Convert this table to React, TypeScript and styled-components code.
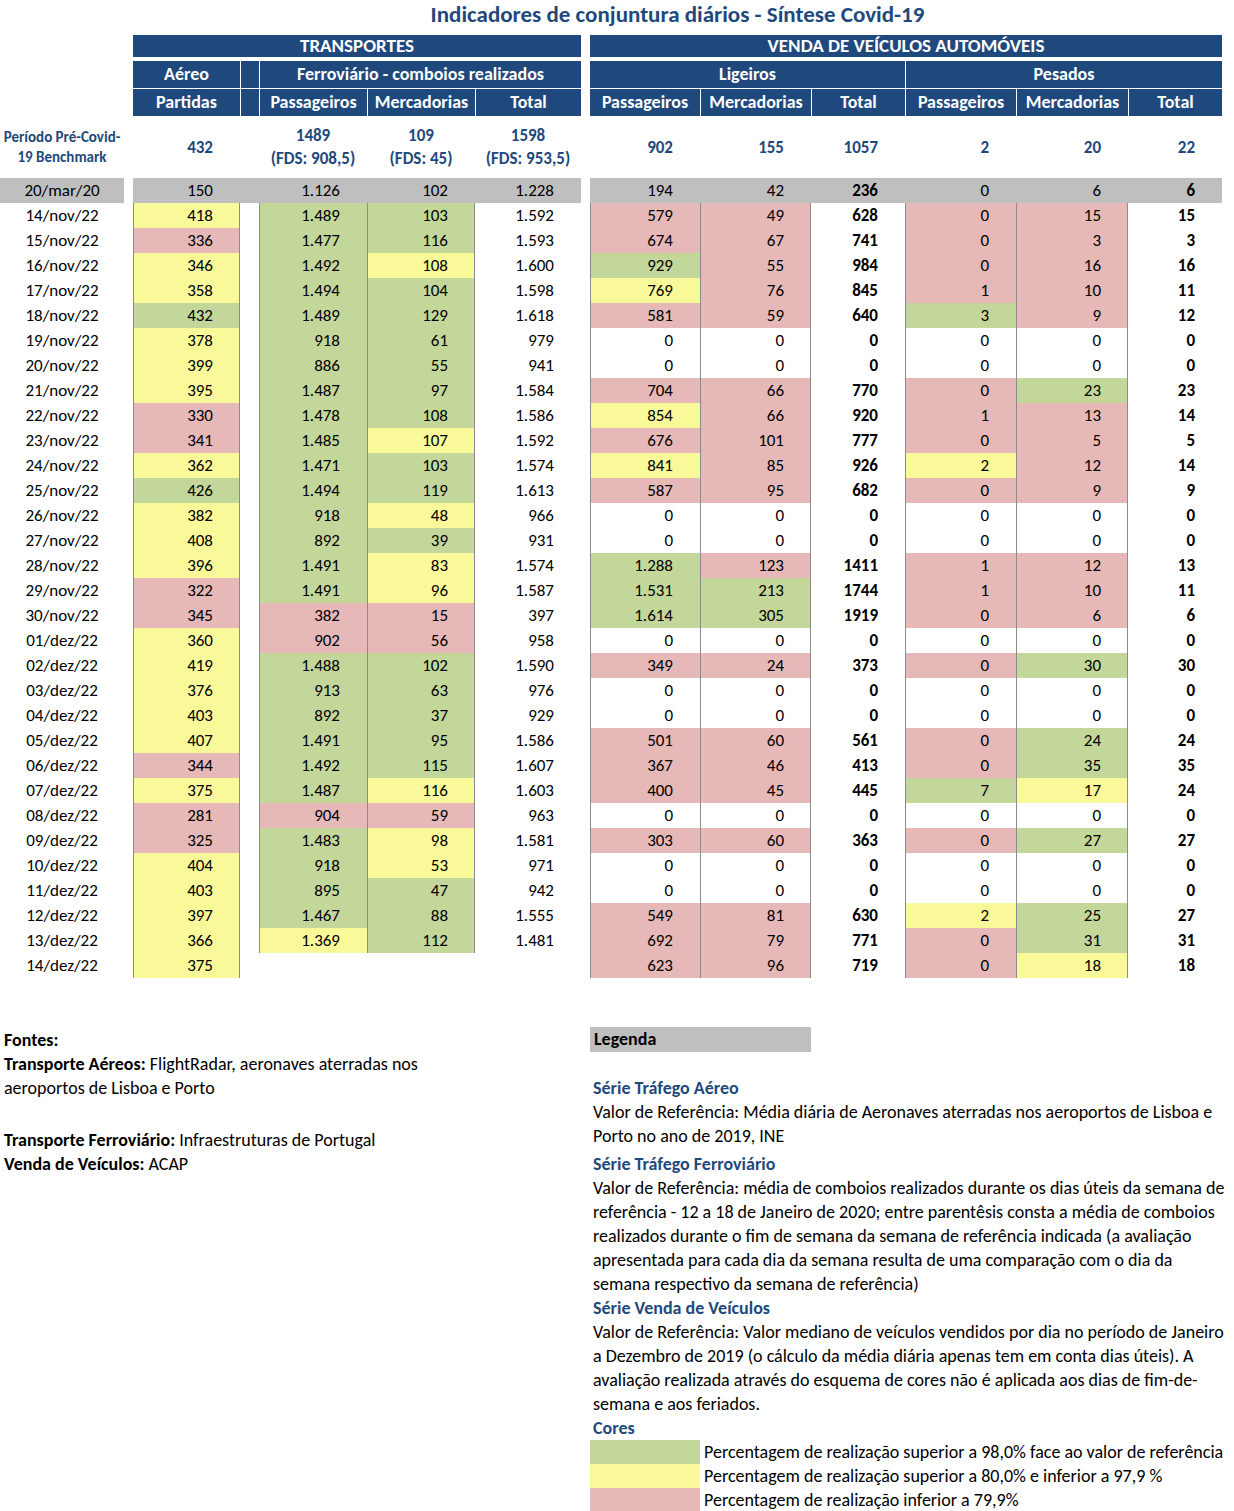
import React from 'react';
import styled, { createGlobalStyle, css } from 'styled-components';

const FONT = `"Carlito", "Calibri", "Lato", sans-serif`;
const BLUE = '#1f497d';
const GRAY = '#bfbfbf';
const LINE = '#8c8c8c';
const COLORS: Record<string, string> = {
  G: '#c4d79b',
  Y: '#f9f99a',
  R: '#e6b8b7',
};

const GlobalStyle = createGlobalStyle`
  html, body { margin: 0; padding: 0; background: #fff; }
  body { font-family: ${FONT}; color: #000; overflow: hidden; }
`;

const Page = styled.div`
  width: 1234px;
  height: 1511px;
  overflow: hidden;
`;

const Sheet = styled.div`
  display: grid;
  grid-template-columns: 124px 9px 107px 19px 108px 108px 106px 9px 110px 111px 94px 111px 112px 94px;
  width: 1222px;
`;

const Title = styled.div`
  grid-column: 3 / 15;
  height: 35px;
  line-height: 28px;
  text-align: center;
  font-size: 23px;
  font-weight: 700;
  color: ${BLUE};
`;

const HeadCell = styled.div<{ $col: string; $h: number; $mb: number; $sep?: boolean; $big?: boolean }>`
  grid-column: ${(p) => p.$col};
  height: ${(p) => p.$h}px;
  line-height: ${(p) => p.$h}px;
  margin-bottom: ${(p) => p.$mb}px;
  background: ${BLUE};
  color: #fff;
  font-weight: 700;
  font-size: ${(p) => (p.$big ? 19 : 18)}px;
  text-align: center;
  white-space: nowrap;
  box-sizing: border-box;
  ${(p) => p.$sep && css`border-left: 1px solid #fff;`}
`;

const BenchLabel = styled.div`
  grid-column: 1 / 2;
  height: 62px;
  display: flex;
  flex-direction: column;
  justify-content: center;
  align-items: center;
  font-size: 15px;
  line-height: 20px;
  font-weight: 700;
  color: ${BLUE};
  white-space: nowrap;
`;

const BenchValue = styled.div<{ $col: number; $center?: boolean }>`
  grid-column: ${(p) => p.$col} / ${(p) => p.$col + 1};
  height: 62px;
  display: flex;
  flex-direction: column;
  justify-content: center;
  align-items: ${(p) => (p.$center ? 'center' : 'flex-end')};
  padding-right: ${(p) => (p.$center ? 0 : 27)}px;
  box-sizing: border-box;
  font-size: 17px;
  line-height: 23px;
  font-weight: 700;
  color: ${BLUE};
  white-space: nowrap;
`;

const Cell = styled.div<{
  $bg?: string;
  $bl?: boolean;
  $br?: boolean;
  $bold?: boolean;
  $center?: boolean;
}>`
  height: 25px;
  line-height: 25px;
  font-size: 17px;
  box-sizing: border-box;
  white-space: nowrap;
  text-align: ${(p) => (p.$center ? 'center' : 'right')};
  padding-right: ${(p) => (p.$center ? 0 : 27)}px;
  font-weight: ${(p) => (p.$bold ? 700 : 400)};
  background: ${(p) => p.$bg || 'transparent'};
  box-shadow: ${(p) => {
    const s: string[] = [];
    if (p.$bl) s.push(`inset 1px 0 0 ${LINE}`);
    if (p.$br) s.push(`inset -1px 0 0 ${LINE}`);
    return s.length ? s.join(', ') : 'none';
  }};
`;

const Positioned = styled(Cell)<{ $col: number }>`
  grid-column: ${(p) => p.$col} / ${(p) => p.$col + 1};
`;

const Bottom = styled.div`
  display: flex;
  margin-top: 49px;
  font-size: 18px;
  line-height: 24px;
`;

const Sources = styled.div`
  width: 590px;
  box-sizing: border-box;
  padding: 1px 0 0 4px;
`;

const Line = styled.div<{ $gap?: number }>`
  white-space: nowrap;
  margin-top: ${(p) => p.$gap || 0}px;
`;

const Legend = styled.div`
  flex: 1;
`;

const LegendTag = styled.div`
  width: 221px;
  height: 25px;
  line-height: 25px;
  background: ${GRAY};
  font-weight: 700;
  padding-left: 4px;
  box-sizing: border-box;
  margin-bottom: 24px;
`;

const SeriesTitle = styled.div<{ $gap?: number }>`
  color: ${BLUE};
  font-weight: 700;
  padding-left: 3px;
  margin-top: ${(p) => p.$gap || 0}px;
  white-space: nowrap;
`;

const TextLine = styled.div`
  padding-left: 3px;
  white-space: nowrap;
`;

const SwatchRow = styled.div`
  display: flex;
  align-items: center;
  height: 24px;
`;

const Swatch = styled.div<{ $c: string }>`
  width: 110px;
  height: 24px;
  background: ${(p) => p.$c};
`;

const SwatchText = styled.div`
  padding-left: 4px;
  white-space: nowrap;
`;

const RAW = [
  '14/nov/22;418Y;1.489G;103G;1.592;579R;49R;628;0R;15R;15',
  '15/nov/22;336R;1.477G;116G;1.593;674R;67R;741;0R;3R;3',
  '16/nov/22;346Y;1.492G;108Y;1.600;929G;55R;984;0R;16R;16',
  '17/nov/22;358Y;1.494G;104G;1.598;769Y;76R;845;1R;10R;11',
  '18/nov/22;432G;1.489G;129G;1.618;581R;59R;640;3G;9R;12',
  '19/nov/22;378Y;918G;61G;979;0;0;0;0;0;0',
  '20/nov/22;399Y;886G;55G;941;0;0;0;0;0;0',
  '21/nov/22;395Y;1.487G;97G;1.584;704R;66R;770;0R;23G;23',
  '22/nov/22;330R;1.478G;108G;1.586;854Y;66R;920;1R;13R;14',
  '23/nov/22;341R;1.485G;107Y;1.592;676R;101R;777;0R;5R;5',
  '24/nov/22;362Y;1.471G;103G;1.574;841Y;85R;926;2Y;12R;14',
  '25/nov/22;426G;1.494G;119G;1.613;587R;95R;682;0R;9R;9',
  '26/nov/22;382Y;918G;48Y;966;0;0;0;0;0;0',
  '27/nov/22;408Y;892G;39G;931;0;0;0;0;0;0',
  '28/nov/22;396Y;1.491G;83Y;1.574;1.288G;123R;1411;1R;12R;13',
  '29/nov/22;322R;1.491G;96Y;1.587;1.531G;213G;1744;1R;10R;11',
  '30/nov/22;345R;382R;15R;397;1.614G;305G;1919;0R;6R;6',
  '01/dez/22;360Y;902R;56R;958;0;0;0;0;0;0',
  '02/dez/22;419Y;1.488G;102G;1.590;349R;24R;373;0R;30G;30',
  '03/dez/22;376Y;913G;63G;976;0;0;0;0;0;0',
  '04/dez/22;403Y;892G;37G;929;0;0;0;0;0;0',
  '05/dez/22;407Y;1.491G;95G;1.586;501R;60R;561;0R;24G;24',
  '06/dez/22;344R;1.492G;115G;1.607;367R;46R;413;0R;35G;35',
  '07/dez/22;375Y;1.487G;116Y;1.603;400R;45R;445;7G;17Y;24',
  '08/dez/22;281R;904R;59R;963;0;0;0;0;0;0',
  '09/dez/22;325R;1.483G;98Y;1.581;303R;60R;363;0R;27G;27',
  '10/dez/22;404Y;918G;53Y;971;0;0;0;0;0;0',
  '11/dez/22;403Y;895G;47G;942;0;0;0;0;0;0',
  '12/dez/22;397Y;1.467G;88G;1.555;549R;81R;630;2Y;25G;27',
  '13/dez/22;366Y;1.369Y;112G;1.481;692R;79R;771;0R;31G;31',
  '14/dez/22;375Y;;;;623R;96R;719;0R;18Y;18',
];

// value columns after the date: [grid column, border-left, border-right, bold]
const SPEC: [number, boolean, boolean, boolean][] = [
  [3, true, true, false],
  [5, true, false, false],
  [6, true, true, false],
  [7, false, false, false],
  [9, true, false, false],
  [10, true, true, false],
  [11, false, false, true],
  [12, true, false, false],
  [13, true, true, false],
  [14, false, false, true],
];

const parse = (v: string) => {
  const last = v.slice(-1);
  if (COLORS[last]) return { text: v.slice(0, -1), bg: COLORS[last] };
  return { text: v, bg: undefined as string | undefined };
};

const GRAY_ROW = ['150', '', '1.126', '102', '1.228', '', '194', '42', '236', '0', '6', '6'];

export default function App() {
  return (
    <Page>
      <GlobalStyle />
      <Sheet>
        <Title>Indicadores de conjuntura diários - Síntese Covid-19</Title>

        <HeadCell $col="3 / 8" $h={22} $mb={4} $big>TRANSPORTES</HeadCell>
        <HeadCell $col="9 / 15" $h={22} $mb={4} $big>VENDA DE VEÍCULOS AUTOMÓVEIS</HeadCell>

        <HeadCell $col="3 / 4" $h={27} $mb={1}>Aéreo</HeadCell>
        <HeadCell $col="4 / 5" $h={27} $mb={1} $sep />
        <HeadCell $col="5 / 8" $h={27} $mb={1} $sep>Ferroviário - comboios realizados</HeadCell>
        <HeadCell $col="9 / 12" $h={27} $mb={1}>Ligeiros</HeadCell>
        <HeadCell $col="12 / 15" $h={27} $mb={1} $sep>Pesados</HeadCell>

        <HeadCell $col="3 / 4" $h={27} $mb={0}>Partidas</HeadCell>
        <HeadCell $col="4 / 5" $h={27} $mb={0} $sep />
        <HeadCell $col="5 / 6" $h={27} $mb={0} $sep>Passageiros</HeadCell>
        <HeadCell $col="6 / 7" $h={27} $mb={0} $sep>Mercadorias</HeadCell>
        <HeadCell $col="7 / 8" $h={27} $mb={0} $sep>Total</HeadCell>
        <HeadCell $col="9 / 10" $h={27} $mb={0}>Passageiros</HeadCell>
        <HeadCell $col="10 / 11" $h={27} $mb={0} $sep>Mercadorias</HeadCell>
        <HeadCell $col="11 / 12" $h={27} $mb={0} $sep>Total</HeadCell>
        <HeadCell $col="12 / 13" $h={27} $mb={0} $sep>Passageiros</HeadCell>
        <HeadCell $col="13 / 14" $h={27} $mb={0} $sep>Mercadorias</HeadCell>
        <HeadCell $col="14 / 15" $h={27} $mb={0} $sep>Total</HeadCell>

        <BenchLabel>
          <span>Período Pré-Covid-</span>
          <span>19 Benchmark</span>
        </BenchLabel>
        <BenchValue $col={3}>432</BenchValue>
        <BenchValue $col={5} $center>
          <span>1489</span>
          <span>(FDS: 908,5)</span>
        </BenchValue>
        <BenchValue $col={6} $center>
          <span>109</span>
          <span>(FDS: 45)</span>
        </BenchValue>
        <BenchValue $col={7} $center>
          <span>1598</span>
          <span>(FDS: 953,5)</span>
        </BenchValue>
        <BenchValue $col={9}>902</BenchValue>
        <BenchValue $col={10}>155</BenchValue>
        <BenchValue $col={11}>1057</BenchValue>
        <BenchValue $col={12}>2</BenchValue>
        <BenchValue $col={13}>20</BenchValue>
        <BenchValue $col={14}>22</BenchValue>

        <Positioned $col={1} $bg={GRAY} $center>20/mar/20</Positioned>
        {GRAY_ROW.map((v, i) => {
          const col = i + 3;
          if (col === 8) return <Positioned key={`g${i}`} $col={col} />;
          return (
            <Positioned key={`g${i}`} $col={col} $bg={GRAY} $bold={col === 11 || col === 14}>
              {v}
            </Positioned>
          );
        })}

        {RAW.map((r) => {
          const parts = r.split(';');
          const date = parts[0];
          const vals = parts.slice(1);
          return (
            <React.Fragment key={date}>
              <Positioned $col={1} $center>{date}</Positioned>
              {vals.map((v, i) => {
                const [col, bl, br, bold] = SPEC[i];
                const { text, bg } = parse(v);
                const empty = text === '';
                return (
                  <Positioned
                    key={`${date}-${col}`}
                    $col={col}
                    $bg={bg}
                    $bl={!empty && bl}
                    $br={!empty && br}
                    $bold={bold}
                  >
                    {text}
                  </Positioned>
                );
              })}
            </React.Fragment>
          );
        })}
      </Sheet>

      <Bottom>
        <Sources>
          <Line><b>Fontes:</b></Line>
          <Line><b>Transporte Aéreos:</b> FlightRadar, aeronaves aterradas nos</Line>
          <Line>aeroportos de Lisboa e Porto</Line>
          <Line $gap={28}><b>Transporte Ferroviário:</b> Infraestruturas de Portugal</Line>
          <Line><b>Venda de Veículos:</b> ACAP</Line>
        </Sources>
        <Legend>
          <LegendTag>Legenda</LegendTag>
          <SeriesTitle>Série Tráfego Aéreo</SeriesTitle>
          <TextLine>Valor de Referência: Média diária de Aeronaves aterradas nos aeroportos de Lisboa e</TextLine>
          <TextLine>Porto no ano de 2019, INE</TextLine>
          <SeriesTitle $gap={4}>Série Tráfego Ferroviário</SeriesTitle>
          <TextLine>Valor de Referência: média de comboios realizados durante os dias úteis da semana de</TextLine>
          <TextLine>referência - 12 a 18 de Janeiro de 2020; entre parentêsis consta a média de comboios</TextLine>
          <TextLine>realizados durante o fim de semana da semana de referência indicada (a avaliação</TextLine>
          <TextLine>apresentada para cada dia da semana resulta de uma comparação com o dia da</TextLine>
          <TextLine>semana respectivo da semana de referência)</TextLine>
          <SeriesTitle>Série Venda de Veículos</SeriesTitle>
          <TextLine>Valor de Referência: Valor mediano de veículos vendidos por dia no período de Janeiro</TextLine>
          <TextLine>a Dezembro de 2019 (o cálculo da média diária apenas tem em conta dias úteis). A</TextLine>
          <TextLine>avaliação realizada através do esquema de cores não é aplicada aos dias de fim-de-</TextLine>
          <TextLine>semana e aos feriados.</TextLine>
          <SeriesTitle>Cores</SeriesTitle>
          <SwatchRow>
            <Swatch $c={COLORS.G} />
            <SwatchText>Percentagem de realização superior a 98,0% face ao valor de referência</SwatchText>
          </SwatchRow>
          <SwatchRow>
            <Swatch $c={COLORS.Y} />
            <SwatchText>Percentagem de realização superior a 80,0% e inferior a 97,9 %</SwatchText>
          </SwatchRow>
          <SwatchRow>
            <Swatch $c={COLORS.R} />
            <SwatchText>Percentagem de realização inferior a 79,9%</SwatchText>
          </SwatchRow>
        </Legend>
      </Bottom>
    </Page>
  );
}
